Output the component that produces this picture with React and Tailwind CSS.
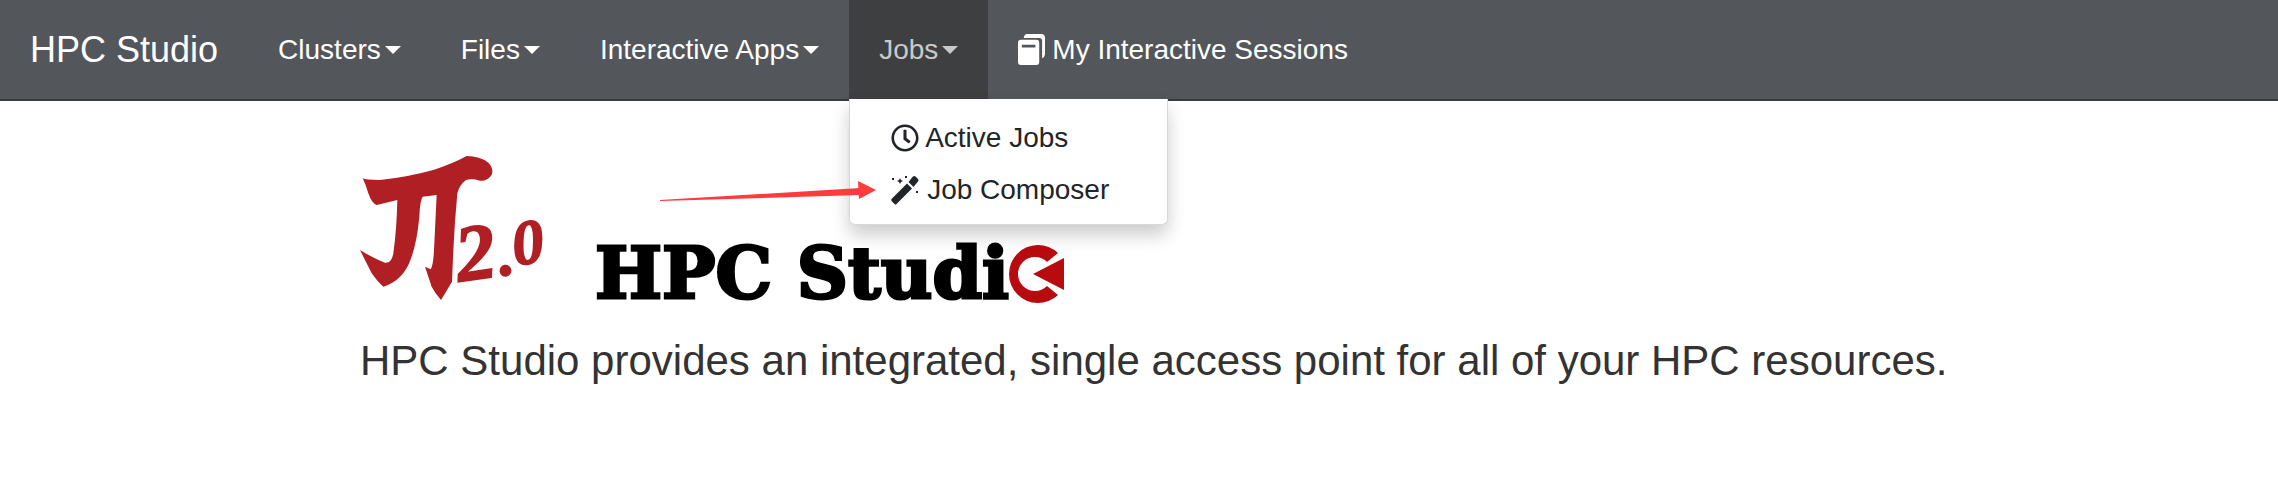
import { FaRegClock } from 'react-icons/fa';

const caret = 'inline-block ml-[4px] align-middle border-x-[8px] border-t-[8px] border-x-transparent border-t-current';

function NavItem({ label, active, children }) {
  return (
    <div className="relative">
      <a className={`flex items-center h-[99px] px-[30px] ${active ? 'bg-[#3e3f41] text-[#c9c9c9]' : 'text-white'}`}>
        {label}
        <span className={caret} />
      </a>
      {children}
    </div>
  );
}

function SessionsIcon() {
  return (
    <svg viewBox="0 0 28 32" className="w-[27px] h-[31px] shrink-0" fill="currentColor">
      <path d="M9 0 H24 Q28 0 28 4 V20 Q28 24 25 25 V7 Q25 4 22 4 H6 Q6 1 9 0 Z" />
      <path fillRule="evenodd" d="M3 6 H19 Q22 6 22 9 V29 Q22 32 19 32 H3 Q0 32 0 29 V9 Q0 6 3 6 Z M4 11 V14 H18 V11 Z" />
    </svg>
  );
}

function WandIcon() {
  return (
    <svg viewBox="0 0 28 30" className="w-[28px] h-[30px] shrink-0" fill="currentColor">
      <path d="M0.5 24 L16 8.5 L21 13.5 L5.5 29 Q4.5 30 3.5 29 L0.5 26 Q0 25 0.5 24 Z" />
      <path d="M17.5 7 L22 1.5 Q23 0.5 24.5 1.5 L27 4 Q28 5 27 6.5 L22.5 12 Z" />
      <path d="M9 3 L10 5 L12 6 L10 7 L9 9 L8 7 L6 6 L8 5 Z" />
      <rect x="1" y="3" width="2" height="2" />
      <rect x="14" y="1" width="2" height="2" />
      <rect x="25" y="16" width="2" height="2" />
    </svg>
  );
}

function PiLogo() {
  return (
    <svg viewBox="60 15 600 435" className="w-[200px] h-[145px] shrink-0 overflow-visible" fill="#b01f24">
      <path d="M68 85 Q75 90 120 90 Q200 82 280 60 Q340 40 380 18 Q420 18 445 38 Q462 55 455 75 Q440 95 420 92 Q395 85 378 90 Q358 105 352 130 L345 215 L340 300 L336 395 L303 450 Q285 430 275 410 L255 350 L272 358 Q280 345 282 300 L290 135 L248 140 Q240 150 238 200 Q230 290 205 345 Q180 395 130 410 Q112 395 95 370 Q75 330 60 300 Q100 325 135 338 Q155 340 160 310 Q170 240 172 150 L110 165 Q95 160 85 130 Q78 105 68 85 Z" />
      <text x="358" y="395" transform="rotate(-8 358 395)" fontFamily="'Liberation Serif', serif" fontStyle="italic" fontWeight="700" fontSize="240" stroke="#b01f24" strokeWidth="5">
        2<tspan fontSize="190" dx="5">.</tspan><tspan fontSize="190" dy="-25">0</tspan>
      </text>
    </svg>
  );
}

export default function App() {
  return (
    <div className="relative min-h-[489px] bg-white font-['Liberation_Sans',Arial,sans-serif] text-[28px] overflow-hidden">
      <nav className="flex items-center h-[101px] bg-[#53565a] border-b-2 border-[#3a3a3c] text-white">
        <a className="pl-[30px] pr-[30px] text-[36px]">HPC Studio</a>
        <NavItem label="Clusters" />
        <NavItem label="Files" />
        <NavItem label="Interactive Apps" />
        <NavItem label="Jobs" active>
          <div className="absolute z-10 left-0 top-[99px] w-[319px] h-[126px] pt-[13px] bg-white rounded-b-[6px] border border-t-0 border-[#d8d8d8] text-[#212529] shadow-[0_10px_18px_rgba(0,0,0,0.2)]">
            <a className="flex items-center gap-[6px] h-[52px] pl-[41px]">
              <FaRegClock className="w-[28px] h-[28px]" />
              Active Jobs
            </a>
            <a className="flex items-center gap-[8px] h-[52px] pl-[41px]">
              <WandIcon />
              Job Composer
            </a>
          </div>
        </NavItem>
        <a className="flex items-center gap-[7px] px-[30px]">
          <SessionsIcon />
          My Interactive Sessions
        </a>
      </nav>

      <main className="pl-[360px] text-[#333333]">
        <div className="flex items-end pt-[54px]">
          <PiLogo />
          <div className="flex items-center ml-[35px] -mb-[9px]">
            <span className="font-['DejaVu_Serif',serif] font-bold text-[71px] leading-none text-black [-webkit-text-stroke:3px_black]">HPC Studi</span>
            <svg viewBox="0 0 60 62" className="w-[60px] h-[62px] shrink-0 -ml-[5px]">
              <path d="M54 10 A29 29 0 1 0 54 52 L43 43 A17 17 0 1 1 43 19 Z" fill="#b80b10" />
              <path d="M29 31 L60 15 V47 Z" fill="#b80b10" />
            </svg>
          </div>
        </div>
        <p className="mt-[31px] text-[42px] leading-[60px]">
          HPC Studio provides an integrated, single access point for all of your HPC resources.
        </p>
      </main>

      {/* annotation arrow */}
      <svg className="absolute left-[655px] top-[175px] w-[230px] h-[35px] z-20" viewBox="0 0 230 35" fill="#ff3b3b">
        <path d="M5 25 L205 13 L205 20 L5 26 Z" />
        <path d="M203 6 L221 15 L204 24 Z" />
      </svg>
    </div>
  );
}
